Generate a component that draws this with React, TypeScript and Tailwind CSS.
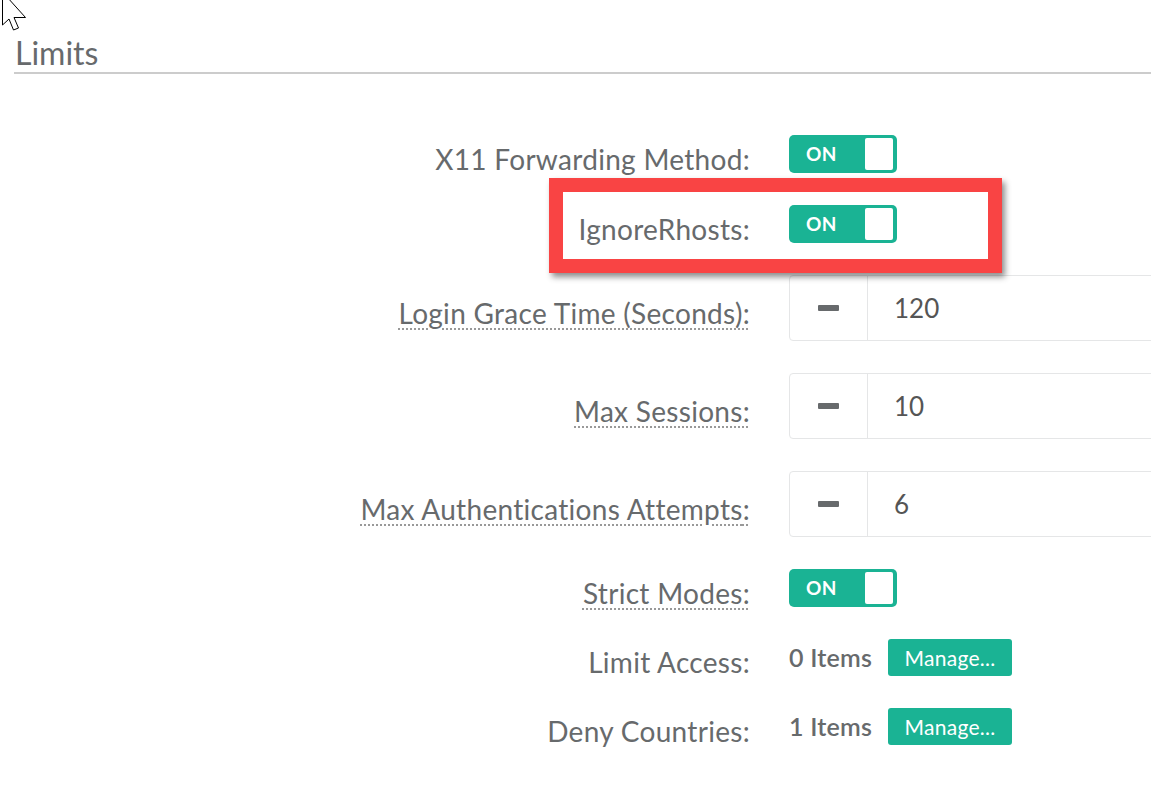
import React from 'react'

const font = { fontFamily: 'Lato, "Open Sans", sans-serif' }

function Toggle() {
  return (
    <div className="flex h-[38px] w-[108px] items-center justify-between rounded-[5px] bg-[#1ab394] pl-[17px] pr-[4px]">
      <span className="text-[19px] font-bold tracking-[0.3px] text-white">ON</span>
      <span className="h-[32px] w-[28px] rounded-[2px] bg-white" />
    </div>
  )
}

function Spinner({ value }: { value: string }) {
  return (
    <div className="flex h-[66px] w-[420px] rounded-[4px] border border-[#e5e6e7]">
      <div className="flex w-[78px] items-center justify-center border-r border-[#e5e6e7]">
        <span className="h-[6px] w-[21px] rounded-[1px] bg-[#676a6c]" />
      </div>
      <div className="flex items-center pl-[26px] text-[26px] text-[#555]">{value}</div>
    </div>
  )
}

function Items({ count }: { count: number }) {
  return (
    <div className="flex items-center">
      <span className="pb-[2px] text-[25px] leading-[30px] font-semibold tracking-[0.2px] text-[#676a6c]">{count} Items</span>
      <button className="ml-[16px] flex h-[37px] w-[124px] items-center justify-center rounded-[3px] bg-[#1ab394] text-[21px] tracking-[0.3px] text-white">
        Manage...
      </button>
    </div>
  )
}

function Label({ text, tip }: { text: string; tip?: boolean }) {
  return (
    <div className="flex items-center justify-end pt-[9px]">
      <span
        className={
          tip
            ? 'text-[28px] leading-[28px] tracking-[0.3px] text-[#676a6c] underline decoration-dotted decoration-[#999] decoration-[2px] underline-offset-[5px]'
            : 'text-[28px] leading-[28px] tracking-[0.3px] text-[#676a6c]'
        }
      >
        {text}:
      </span>
    </div>
  )
}

const rows: { label: string; tip?: boolean; control: React.ReactNode }[] = [
  { label: 'X11 Forwarding Method', control: <Toggle /> },
  { label: 'IgnoreRhosts', control: <Toggle /> },
  { label: 'Login Grace Time (Seconds)', tip: true, control: <Spinner value="120" /> },
  { label: 'Max Sessions', tip: true, control: <Spinner value="10" /> },
  { label: 'Max Authentications Attempts', tip: true, control: <Spinner value="6" /> },
  { label: 'Strict Modes', tip: true, control: <Toggle /> },
  { label: 'Limit Access', control: <Items count={0} /> },
  { label: 'Deny Countries', control: <Items count={1} /> },
]

export default function App() {
  return (
    <div className="relative h-[799px] w-[1151px] overflow-hidden bg-white" style={font}>
      {/* mouse pointer */}
      <svg className="absolute left-0 top-0" width="34" height="34" viewBox="0 0 34 34">
        <path
          d="M2.5 -8 L2.5 25 L9 19 L13.5 30 L18.5 28 L14 17.5 L25.5 17.5 Z"
          fill="white"
          stroke="black"
          strokeWidth="1"
          strokeLinejoin="miter"
        />
      </svg>

      <div className="pl-[14px]">
        <h2 className="pt-[35px] pl-px text-[32px] leading-[36px] text-[#676a6c]">Limits</h2>
        <div className="mt-px h-[2px] bg-[#cccccc]" />

        <div className="mt-[61px] grid grid-cols-[736px_1fr] gap-x-[39px] gap-y-[32px]">
          {rows.map((r) => (
            <React.Fragment key={r.label}>
              <Label text={r.label} tip={r.tip} />
              <div className="flex items-center">{r.control}</div>
            </React.Fragment>
          ))}
        </div>
      </div>

      {/* highlight box */}
      <div className="absolute left-[549px] top-[178px] h-[95px] w-[453px] border-[14px] border-[#f94444] shadow-[3px_4px_6px_rgba(0,0,0,0.45)]" />
    </div>
  )
}
